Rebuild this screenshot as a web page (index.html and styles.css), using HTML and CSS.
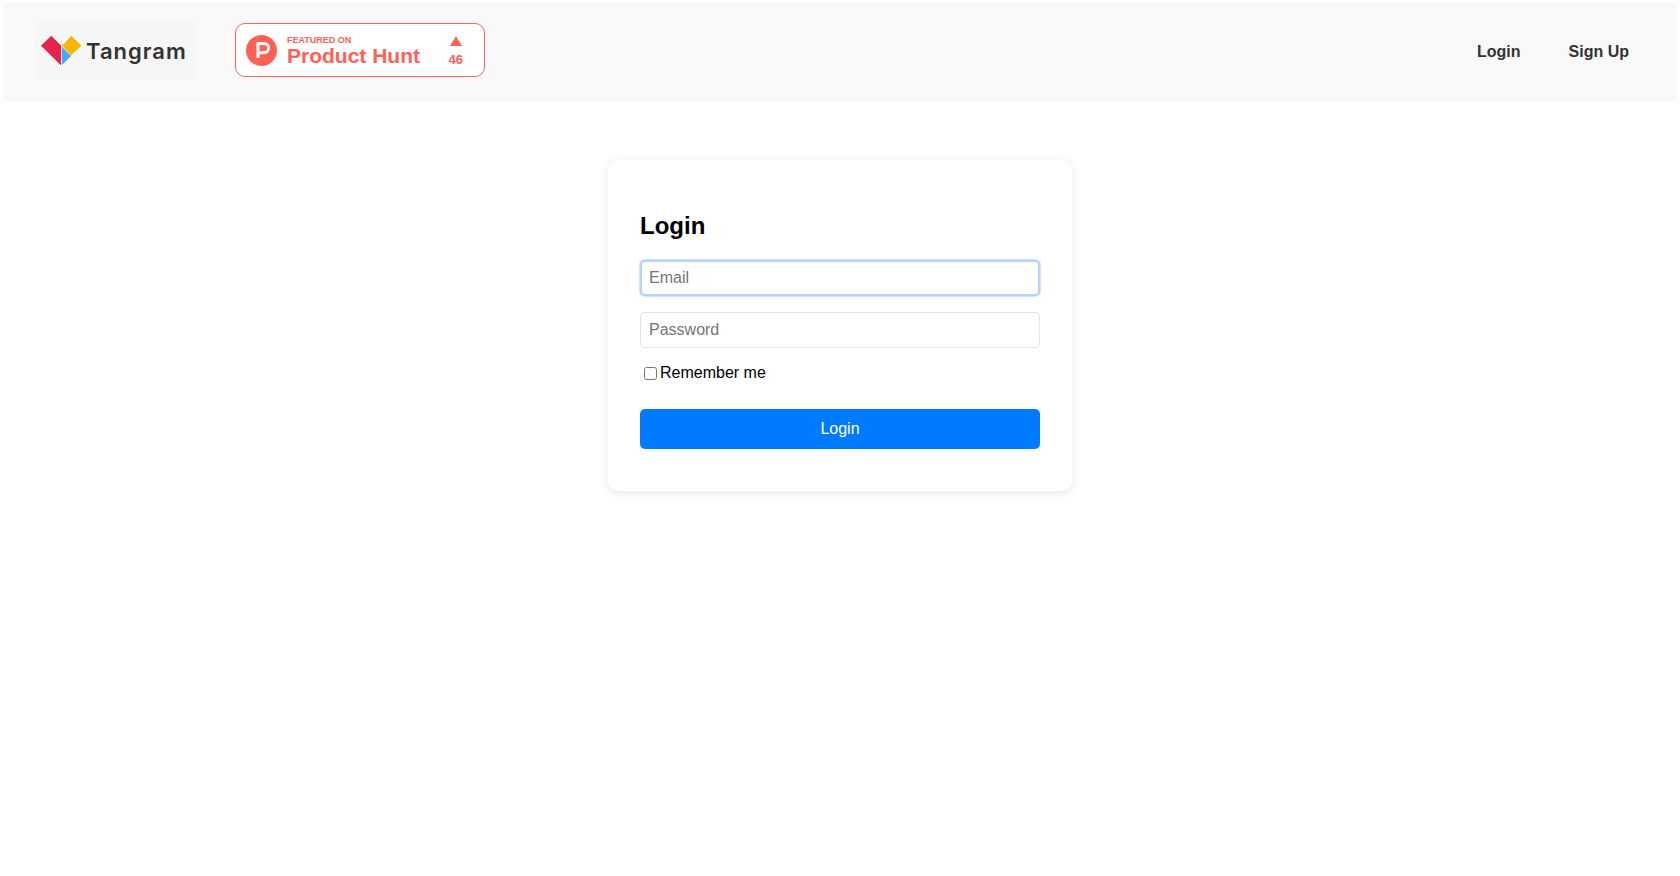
FILE: index.html
```html
<!DOCTYPE html>
<html lang="en">
<head>
<meta charset="utf-8">
<title>Tangram Login</title>
<link rel="stylesheet" href="styles.css">
</head>
<body>
<header class="header">
  <div class="brand">
    <a class="logo" href="#">
      <svg class="logo-mark" width="42" height="32" viewBox="0 0 42 32" aria-hidden="true">
        <polygon points="0,11.700 10.300,1.700 20,11.500 20,31 19.500,31" fill="#e5234a"/>
        <polygon points="30.300,1.700 40.300,11.700 30,21.500 21,12" fill="#fdb606"/>
        <polygon points="21,13 30,22 21,31" fill="#46a9f8"/>
      </svg>
      <span class="logo-text">Tangram</span>
    </a>
    <a class="badge" href="#">
      <svg class="badge-icon" width="31" height="31" viewBox="0 0 31 31" aria-hidden="true">
        <circle cx="15.500" cy="15.500" r="15.500" fill="#ff6154"/>
        <path d="M12 23V8.500h6a4.600 4.600 0 0 1 0 9.200h-6" fill="none" stroke="#fff" stroke-width="3"/>
      </svg>
      <span class="badge-text">
        <span class="badge-small">FEATURED ON</span>
        <span class="badge-big">Product Hunt</span>
      </span>
      <span class="badge-votes">
        <span class="badge-arrow"></span>
        <span class="badge-count">46</span>
      </span>
    </a>
  </div>
  <nav class="nav">
    <a class="nav-link" href="#">Login</a>
    <a class="nav-link" href="#">Sign Up</a>
  </nav>
</header>
<main class="main">
  <form class="card">
    <h2 class="title">Login</h2>
    <input class="field field-focus" type="email" placeholder="Email">
    <input class="field" type="password" placeholder="Password">
    <label class="remember"><input class="check" type="checkbox">Remember me</label>
    <button class="submit" type="button">Login</button>
  </form>
</main>
</body>
</html>
```
FILE: styles.css
```css
* {
  box-sizing: border-box;
}

html,
body {
  height: 100%;
}

body {
  margin: 0;
  background: #fff;
  color: #000;
  font-family: "Liberation Sans", Arial, sans-serif;
  font-size: 16px;
}

a {
  text-decoration: none;
}

.header {
  display: flex;
  align-items: center;
  justify-content: space-between;
  height: 98px;
  margin: 3px 3px 0;
  padding: 0 24px 0 32px;
  background: #f9f9f9;
}

.brand {
  display: flex;
  align-items: center;
  gap: 40px;
  margin-bottom: 4px;
}

.logo {
  display: flex;
  align-items: center;
  gap: 3px;
  width: 160px;
  height: 58px;
  padding-left: 6px;
  background: #f6f6f6;
}

.logo-mark {
  flex: none;
}

.logo-text {
  margin-top: 2px;
  color: #333;
  font-family: Inter, sans-serif;
  font-size: 22px;
  font-weight: 600;
  letter-spacing: 1px;
}

.badge {
  display: flex;
  align-items: center;
  width: 250px;
  height: 54px;
  padding: 0 10px;
  border: 1px solid #ff6154;
  border-radius: 10px;
  background: #fff;
  color: #ff6154;
}

.badge-icon {
  flex: none;
}

.badge-text {
  display: flex;
  flex-direction: column;
  margin-top: 2px;
  margin-left: 10px;
  font-weight: 700;
}

.badge-small {
  font-size: 9px;
  line-height: 10px;
}

.badge-big {
  font-size: 21px;
  line-height: 22px;
}

.badge-votes {
  display: flex;
  flex-direction: column;
  align-items: center;
  gap: 7px;
  margin-top: 3px;
  margin-left: auto;
  margin-right: 11px;
  font-weight: 700;
}

.badge-arrow {
  width: 0;
  height: 0;
  border-right: 6px solid transparent;
  border-bottom: 10px solid #ff6154;
  border-left: 6px solid transparent;
}

.badge-count {
  font-size: 13px;
  line-height: 14px;
}

.nav {
  display: flex;
}

.nav-link {
  padding: 0 24px;
  color: #333;
  font-weight: 700;
}

.main {
  display: flex;
  justify-content: center;
  padding-top: 59px;
}

.card {
  display: flex;
  flex-direction: column;
  width: 464px;
  height: 331px;
  padding: 32px;
  border-radius: 10px;
  background: #fff;
  box-shadow: 0 2px 10px rgba(0, 0, 0, 0.1);
}

.title {
  margin: 20px 0 20px;
  font-size: 24px;
  line-height: 28px;
  font-weight: 700;
}

.field {
  width: 100%;
  height: 36px;
  margin-bottom: 16px;
  padding: 0 8px;
  border: 1px solid #e3e3e3;
  border-radius: 5px;
  outline: none;
  background: #fff;
  font-family: inherit;
  font-size: 16px;
}

.field-focus {
  padding: 0 7px;
  border: 2px solid #b5d2fb;
  box-shadow: 0 0 1px 1px #cfe2fd;
}

.remember {
  display: flex;
  align-items: center;
  height: 18px;
  margin: 0;
  line-height: 18px;
}

.check {
  width: 13px;
  height: 13px;
  margin: 1px 3px 0 4px;
}

.submit {
  height: 40px;
  margin-top: 27px;
  border: 0;
  border-radius: 5px;
  background: #007bff;
  color: #fff;
  font-family: inherit;
  font-size: 16px;
}
```
